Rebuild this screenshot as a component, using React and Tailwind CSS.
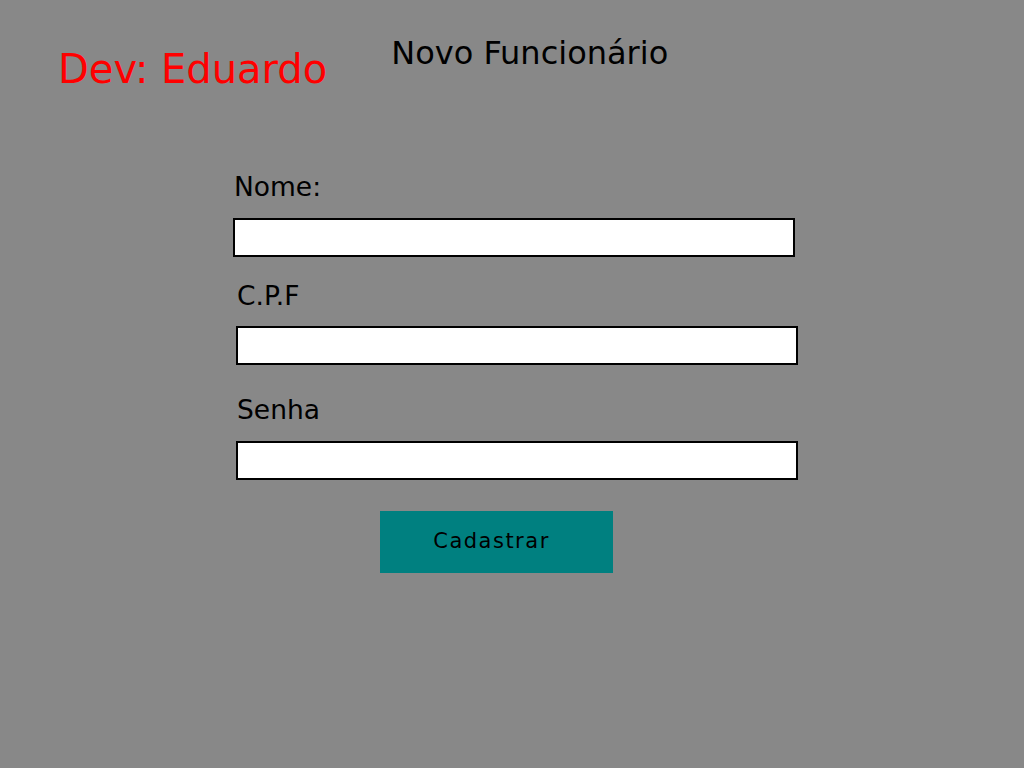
export default function App() {
  return (
    <div
      className="w-[1024px] h-[768px] bg-[#888888] text-black relative"
      style={{ fontFamily: '"DejaVu Sans", sans-serif' }}
    >
      {/* Header */}
      <div className="flex items-start">
        <h2 className="ml-[58px] mt-[49px] text-[40px] leading-none text-[#ff0000]">
          Dev: Eduardo
        </h2>
        <h1 className="ml-[64px] mt-[37px] text-[32px] leading-none">
          Novo Funcionário
        </h1>
      </div>

      {/* Form */}
      <form className="flex flex-col mt-[85px]" onSubmit={(e) => e.preventDefault()}>
        <label className="ml-[234px] text-[26.5px] leading-none">Nome:</label>
        <input
          type="text"
          className="ml-[233px] mt-[17px] w-[562px] h-[39px] bg-white border-2 border-black outline-none"
        />

        <label className="ml-[237px] mt-[26px] text-[26.5px] leading-none">C.P.F</label>
        <input
          type="text"
          className="ml-[236px] mt-[17px] w-[562px] h-[39px] bg-white border-2 border-black outline-none"
        />

        <label className="ml-[237px] mt-[32px] text-[26.5px] leading-none">Senha</label>
        <input
          type="password"
          className="ml-[236px] mt-[17px] w-[562px] h-[39px] bg-white border-2 border-black outline-none"
        />

        <button
          type="submit"
          className="ml-[380px] mt-[31px] w-[233px] h-[62px] bg-[#008080] text-[21px] tracking-[1.5px] text-black pr-[10px]"
        >
          Cadastrar
        </button>
      </form>
    </div>
  );
}
